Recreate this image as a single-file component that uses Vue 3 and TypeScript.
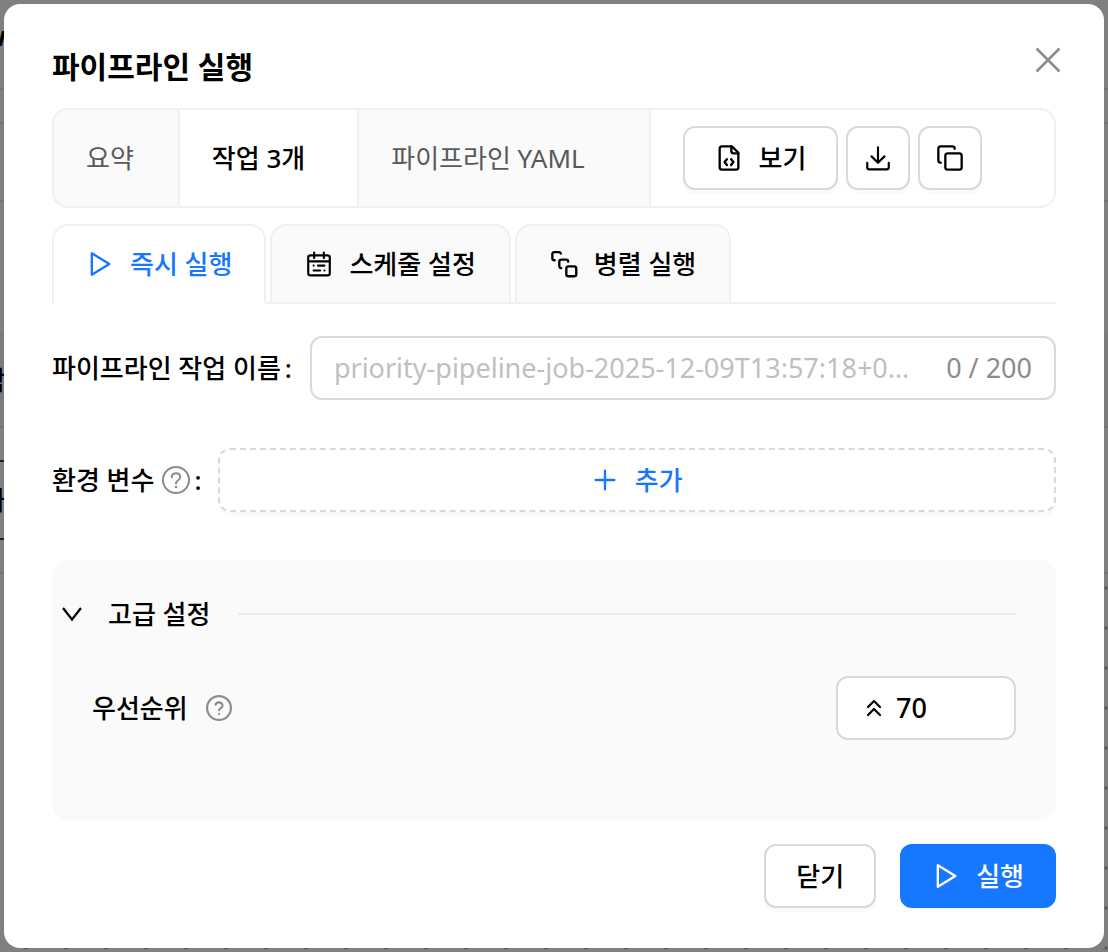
<script setup lang="ts">
import { ref } from 'vue'

const summaryTabs = ['요약', '작업 3개', '파이프라인 YAML']
const activeSummary = ref(1)
const modes = ['즉시 실행', '스케줄 설정', '병렬 실행']
const activeMode = ref(0)
const jobName = ref('')
const priority = ref('70')
const placeholder = 'priority-pipeline-job-2025-12-09T13:57:18+09:00'
</script>

<template>
  <div class="backdrop">
    <div class="behind" aria-hidden="true">
      <span class="line l1"></span><span class="line l2"></span><span class="line l3"></span>
      <span class="band"></span>
      <span class="line l4"></span><span class="line l5"></span><span class="field"></span>
      <span class="scrap s1">w</span><span class="scrap s2">탐</span><span class="scrap s3">가</span>
      <span class="dots"></span>
    </div>
    <section class="modal" role="dialog" aria-modal="true" aria-labelledby="dialog-title">
      <header class="head">
        <h1 id="dialog-title">파이프라인 실행</h1>
        <button class="close" type="button" aria-label="닫기">
          <svg width="26" height="26" viewBox="0 0 26 26" fill="none" stroke="currentColor" stroke-width="2.6"><path d="M1.500 1.500 24.500 24.500M24.500 1.500 1.500 24.500" /></svg>
        </button>
      </header>

      <div class="summary">
        <button
          v-for="(tab, i) in summaryTabs" :key="tab" type="button"
          class="summary-tab" :class="{ active: activeSummary === i }" @click="activeSummary = i"
        >{{ tab }}</button>
        <div class="tools">
          <button class="btn view" type="button">
            <svg class="icon" viewBox="0 0 24 24"><path d="M14.5 2H6a2 2 0 0 0-2 2v16a2 2 0 0 0 2 2h12a2 2 0 0 0 2-2V7.500z" /><path d="M14 2v4a2 2 0 0 0 2 2h4" /><path d="m10.200 13-2 2.500 2 2.500" /><path d="m13.800 13 2 2.500-2 2.500" /></svg>
            <span>보기</span>
          </button>
          <button class="btn square" type="button" aria-label="다운로드">
            <svg class="icon" viewBox="-1 -1 26 26"><path d="M12 2v14M6 10.500l6 6 6-6" /><path d="M2 16.500v4a2 2 0 0 0 2 2h16a2 2 0 0 0 2-2v-4" /></svg>
          </button>
          <button class="btn square" type="button" aria-label="복사">
            <svg class="icon" viewBox="0 0 24 24"><rect x="8" y="8" width="14" height="14" rx="2" /><path d="M4 16c-1.100 0-2-.9-2-2V4c0-1.100.9-2 2-2h10c1.100 0 2 .9 2 2" /></svg>
          </button>
        </div>
      </div>

      <div class="modes" role="tablist">
        <button
          v-for="(mode, i) in modes" :key="mode" type="button" role="tab"
          class="mode" :class="{ active: activeMode === i }" :aria-selected="activeMode === i" @click="activeMode = i"
        >
          <svg v-if="i === 0" class="icon" viewBox="0 0 24 24"><path d="M5 2.800v18.400l15-9.200z" /></svg>
          <svg v-else-if="i === 1" class="icon" viewBox="-1 -1 26 26"><rect x="2" y="4" width="20" height="18.500" rx="2" /><path d="M2 9.500h20M7.500 1.500v5M16.500 1.500v5" /><path d="M7 13.500h.01M11 13.500h6M7 18h6M17 18h.01" /></svg>
          <svg v-else class="icon" viewBox="0 0 24 24"><path d="M4 8.800H3.500A1.800 1.800 0 0 1 2 7V3.500A1.800 1.800 0 0 1 3.800 1.800h3.700A1.800 1.800 0 0 1 9.300 3" /><path d="M9.600 15.600A1.800 1.800 0 0 1 8 13.800V10a1.800 1.800 0 0 1 1.800-1.800h4A1.800 1.800 0 0 1 15.600 10" /><rect x="14" y="14" width="8.500" height="8.500" rx="1.800" /></svg>
          <span>{{ mode }}</span>
        </button>
      </div>

      <div class="row name-row">
        <label for="job-name">파이프라인 작업 이름<span class="colon">:</span></label>
        <div class="name-box">
          <input id="job-name" v-model="jobName" type="text" maxlength="200" :placeholder="placeholder" />
          <span class="count">{{ jobName.length }} / 200</span>
        </div>
      </div>

      <div class="row env-row">
        <span id="env-label" class="env-label">환경 변수
          <svg class="help" viewBox="0 0 28 28"><circle cx="14" cy="14" r="13" /><path d="M9.800 11.200c0-2.500 1.700-4 4.200-4s4.200 1.500 4.200 3.800c0 3.300-4.200 3.200-4.200 6.600" /><circle class="dot" cx="14" cy="21" r="1.300" /></svg><span class="colon">:</span></span>
        <button class="btn add" type="button" aria-describedby="env-label">
          <svg class="icon" viewBox="0 0 24 24"><path d="M12 4v16M4 12h16" /></svg>
          <span>추가</span>
        </button>
      </div>

      <section class="advanced">
        <button class="advanced-head" type="button" aria-expanded="true">
          <svg class="chevron" width="20" height="14" viewBox="0 0 20 14" fill="none" stroke="currentColor" stroke-width="2.200"><path d="m1 1 9 11.500L19 1" /></svg>
          <span>고급 설정</span>
          <span class="rule"></span>
        </button>
        <div class="priority">
          <label for="priority">우선순위</label>
          <svg class="help small" viewBox="0 0 24 24"><circle cx="12" cy="12" r="11" /><path d="M8.800 9a3.300 3.300 0 0 1 6.400 1c0 2-3.200 2.500-3.200 4M12 17.500h.01" /></svg>
          <div class="select-box">
            <svg width="16" height="18" viewBox="0 0 16 18" fill="none" stroke="currentColor" stroke-width="2.200" stroke-linecap="round" stroke-linejoin="round"><path d="m2 8 6-6 6 6M2 16l6-6 6 6" /></svg>
            <select id="priority" v-model="priority"><option>70</option><option>50</option><option>30</option></select>
          </div>
        </div>
      </section>

      <footer class="foot">
        <button class="btn cancel" type="button">닫기</button>
        <button class="btn primary" type="button">
          <svg class="icon" viewBox="0 0 24 24"><path d="M5 2.800v18.400l15-9.200z" /></svg>
          <span>실행</span>
        </button>
      </footer>
    </section>
  </div>
</template>

<style>
body {
  margin: 0;
}
</style>

<style scoped>
* {
  box-sizing: border-box;
}
.backdrop {
  position: relative;
  min-height: 100vh;
  padding: 4px;
  background: #808080;
  color: #000;
  font: 500 26px/40px "Noto Sans", "Noto Sans CJK KR", sans-serif;
  overflow: hidden;
}
button, input, select {
  font: inherit;
  color: inherit;
  margin: 0;
}
button {
  cursor: pointer;
}
.behind {
  position: absolute;
  inset: 0;
}
.behind > span {
  position: absolute;
}
.line {
  left: 0;
  right: 0;
  height: 2px;
  background: #747474;
}
.l1 { top: 88px; }
.l2 { top: 122px; }
.l3 { top: 200px; }
.l4 { top: 426px; }
.l5 { top: 572px; }
.band {
  top: 332px;
  left: 0;
  right: 0;
  height: 96px;
  background: #7c7c7c;
}
.field {
  top: 460px;
  left: -40px;
  width: 60px;
  height: 80px;
  border: 2px solid #222;
}
.scrap {
  right: calc(100% - 6px);
}
.s1 {
  top: 16px;
  font-weight: 700;
}
.s2 { top: 360px; }
.s3 { top: 480px; }
.dots {
  inset: 572px 0 0;
  background: radial-gradient(circle, #555 1px, transparent 2px) 6px -4px / 40px 40px;
}
.modal {
  position: relative;
  min-height: calc(100vh - 8px);
  padding: 40px 48px;
  background: #fff;
  border-radius: 16px;
}
.head {
  display: flex;
  justify-content: space-between;
  align-items: flex-start;
  height: 64px;
}
h1 {
  margin: 0;
  font-size: 30px;
  line-height: 46px;
  font-weight: 700;
}
.close {
  display: flex;
  align-items: center;
  justify-content: center;
  width: 44px;
  height: 44px;
  margin: -6px -14px 0 0;
  padding: 0;
  border: 0;
  background: none;
  color: #8c8c8c;
}
.summary {
  display: flex;
  height: 100px;
  border: 2px solid #f0f0f0;
  border-radius: 16px;
  overflow: hidden;
}
.summary-tab {
  padding: 0 52px 0 32px;
  border: 0;
  border-right: 2px solid #f0f0f0;
  background: #fafafa;
  color: #595959;
  font-weight: 400;
  text-align: left;
  white-space: nowrap;
}
.summary-tab:first-child {
  padding-right: 44px;
}
.summary-tab:nth-child(3) {
  padding-right: 64px;
}
.summary-tab.active {
  background: #fff;
  color: #000;
  font-weight: 500;
}
.tools {
  display: flex;
  align-items: center;
  gap: 8px;
  padding-left: 32px;
}
.btn {
  display: flex;
  align-items: center;
  justify-content: center;
  gap: 16px;
  height: 64px;
  padding: 0 30px;
  border: 2px solid #d9d9d9;
  border-radius: 12px;
  background: #fff;
  box-shadow: 0 4px 0 rgba(0, 0, 0, 0.02);
}
.square {
  width: 64px;
  padding: 0;
}
.icon {
  flex: none;
  width: 28px;
  height: 28px;
  fill: none;
  stroke: currentColor;
  stroke-width: 2;
  stroke-linecap: round;
  stroke-linejoin: round;
}
.modes {
  display: flex;
  gap: 4px;
  margin-top: 16px;
  box-shadow: inset 0 -2px 0 #f0f0f0;
}
.mode {
  display: flex;
  align-items: center;
  gap: 16px;
  height: 80px;
  padding: 0 33px;
  border: 2px solid #f0f0f0;
  border-radius: 16px 16px 0 0;
  background: #fafafa;
}
.mode.active {
  padding: 0 32px;
  border-bottom-color: #fff;
  background: #fff;
  color: #1677ff;
}
.row {
  display: flex;
  align-items: center;
}
.name-row {
  margin-top: 32px;
  gap: 18px;
}
.row label, .env-label {
  display: flex;
  align-items: center;
  flex: none;
  white-space: nowrap;
}
.colon {
  margin-left: 4px;
}
.name-box {
  display: flex;
  align-items: center;
  flex: 1;
  min-width: 0;
  height: 64px;
  padding: 0 22px;
  gap: 24px;
  border: 2px solid #d9d9d9;
  border-radius: 12px;
  font-size: 27px;
  font-weight: 400;
}
.name-box input {
  flex: 1;
  min-width: 0;
  padding: 0;
  border: 0;
  outline: 0;
  background: none;
  text-overflow: ellipsis;
}
.name-box input::placeholder {
  color: #bfbfbf;
  opacity: 1;
}
.count {
  color: #8c8c8c;
  white-space: nowrap;
}
.env-row {
  margin-top: 48px;
  gap: 16px;
}
.help {
  width: 28px;
  height: 28px;
  margin-left: 8px;
  fill: none;
  stroke: #8c8c8c;
  stroke-width: 2;
  stroke-linecap: round;
}
.help .dot {
  fill: #8c8c8c;
  stroke: none;
}
.help.small {
  width: 26px;
  height: 26px;
  margin-left: 18px;
}
.add {
  flex: 1;
  border-style: dashed;
  color: #1677ff;
}
.advanced {
  min-height: 260px;
  margin-top: 48px;
  padding: 32px 40px 0 8px;
  border-radius: 16px;
  background: #fafafa;
}
.advanced-head {
  display: flex;
  align-items: center;
  width: 100%;
  height: 44px;
  padding: 0 0 0 2px;
  border: 0;
  background: none;
}
.chevron {
  margin-right: 26px;
}
.rule {
  flex: 1;
  height: 2px;
  margin-left: 28px;
  background: #ebebeb;
}
.priority {
  display: flex;
  align-items: center;
  margin-top: 40px;
  padding-left: 32px;
}
.select-box {
  display: flex;
  align-items: center;
  gap: 14px;
  width: 180px;
  height: 64px;
  margin-left: auto;
  padding: 0 28px;
  border: 2px solid #d9d9d9;
  border-radius: 12px;
  background: #fff;
}
select {
  flex: 1;
  min-width: 0;
  padding: 0;
  border: 0;
  background: none;
  appearance: none;
  font-size: 27px;
}
.foot {
  display: flex;
  justify-content: flex-end;
  gap: 24px;
  margin-top: 24px;
}
.primary {
  border-color: #1677ff;
  background: #1677ff;
  color: #fff;
  box-shadow: none;
}
</style>
